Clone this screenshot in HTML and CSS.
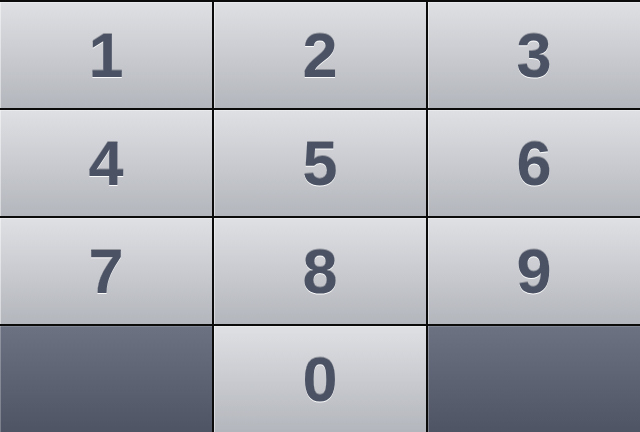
FILE: index.html
```html
<!DOCTYPE html>
<html>
<head>
<meta charset="utf-8">
<link rel="stylesheet" href="styles.css">
</head>
<body>
<div class="pad">
  <div class="key">1</div>
  <div class="key">2</div>
  <div class="key">3</div>
  <div class="key">4</div>
  <div class="key">5</div>
  <div class="key">6</div>
  <div class="key">7</div>
  <div class="key">8</div>
  <div class="key">9</div>
  <div class="key dark"></div>
  <div class="key">0</div>
  <div class="key dark"></div>
</div>
</body>
</html>
```
FILE: styles.css
```css
html, body {
  margin: 0;
  padding: 0;
  width: 640px;
  height: 432px;
  overflow: hidden;
  background: #0b0b0c;
}
.pad {
  box-sizing: border-box;
  width: 640px;
  height: 432px;
  padding-top: 2px;
  display: grid;
  grid-template-columns: repeat(3, 1fr);
  grid-template-rows: repeat(4, 1fr);
  gap: 2px;
  background: #0b0b0c;
}
.key {
  display: flex;
  align-items: center;
  justify-content: center;
  background: linear-gradient(#dfe0e4, #b3b6bc);
  box-shadow: inset 1px 0 0 rgba(255,255,255,0.45), inset 0 1px 0 rgba(255,255,255,0.35);
  font-family: "Liberation Sans", Arial, sans-serif;
  font-weight: bold;
  font-size: 63px;
  line-height: 1;
  color: #4b5264;
  text-shadow: 0 1px 0 rgba(255,255,255,0.9), 0 -1px 0 rgba(40,44,56,0.35);
}
.key.dark {
  background: linear-gradient(#6c7282, #4f5465);
  box-shadow: inset 1px 0 0 rgba(255,255,255,0.25), inset 0 1px 0 rgba(255,255,255,0.15);
}
```
